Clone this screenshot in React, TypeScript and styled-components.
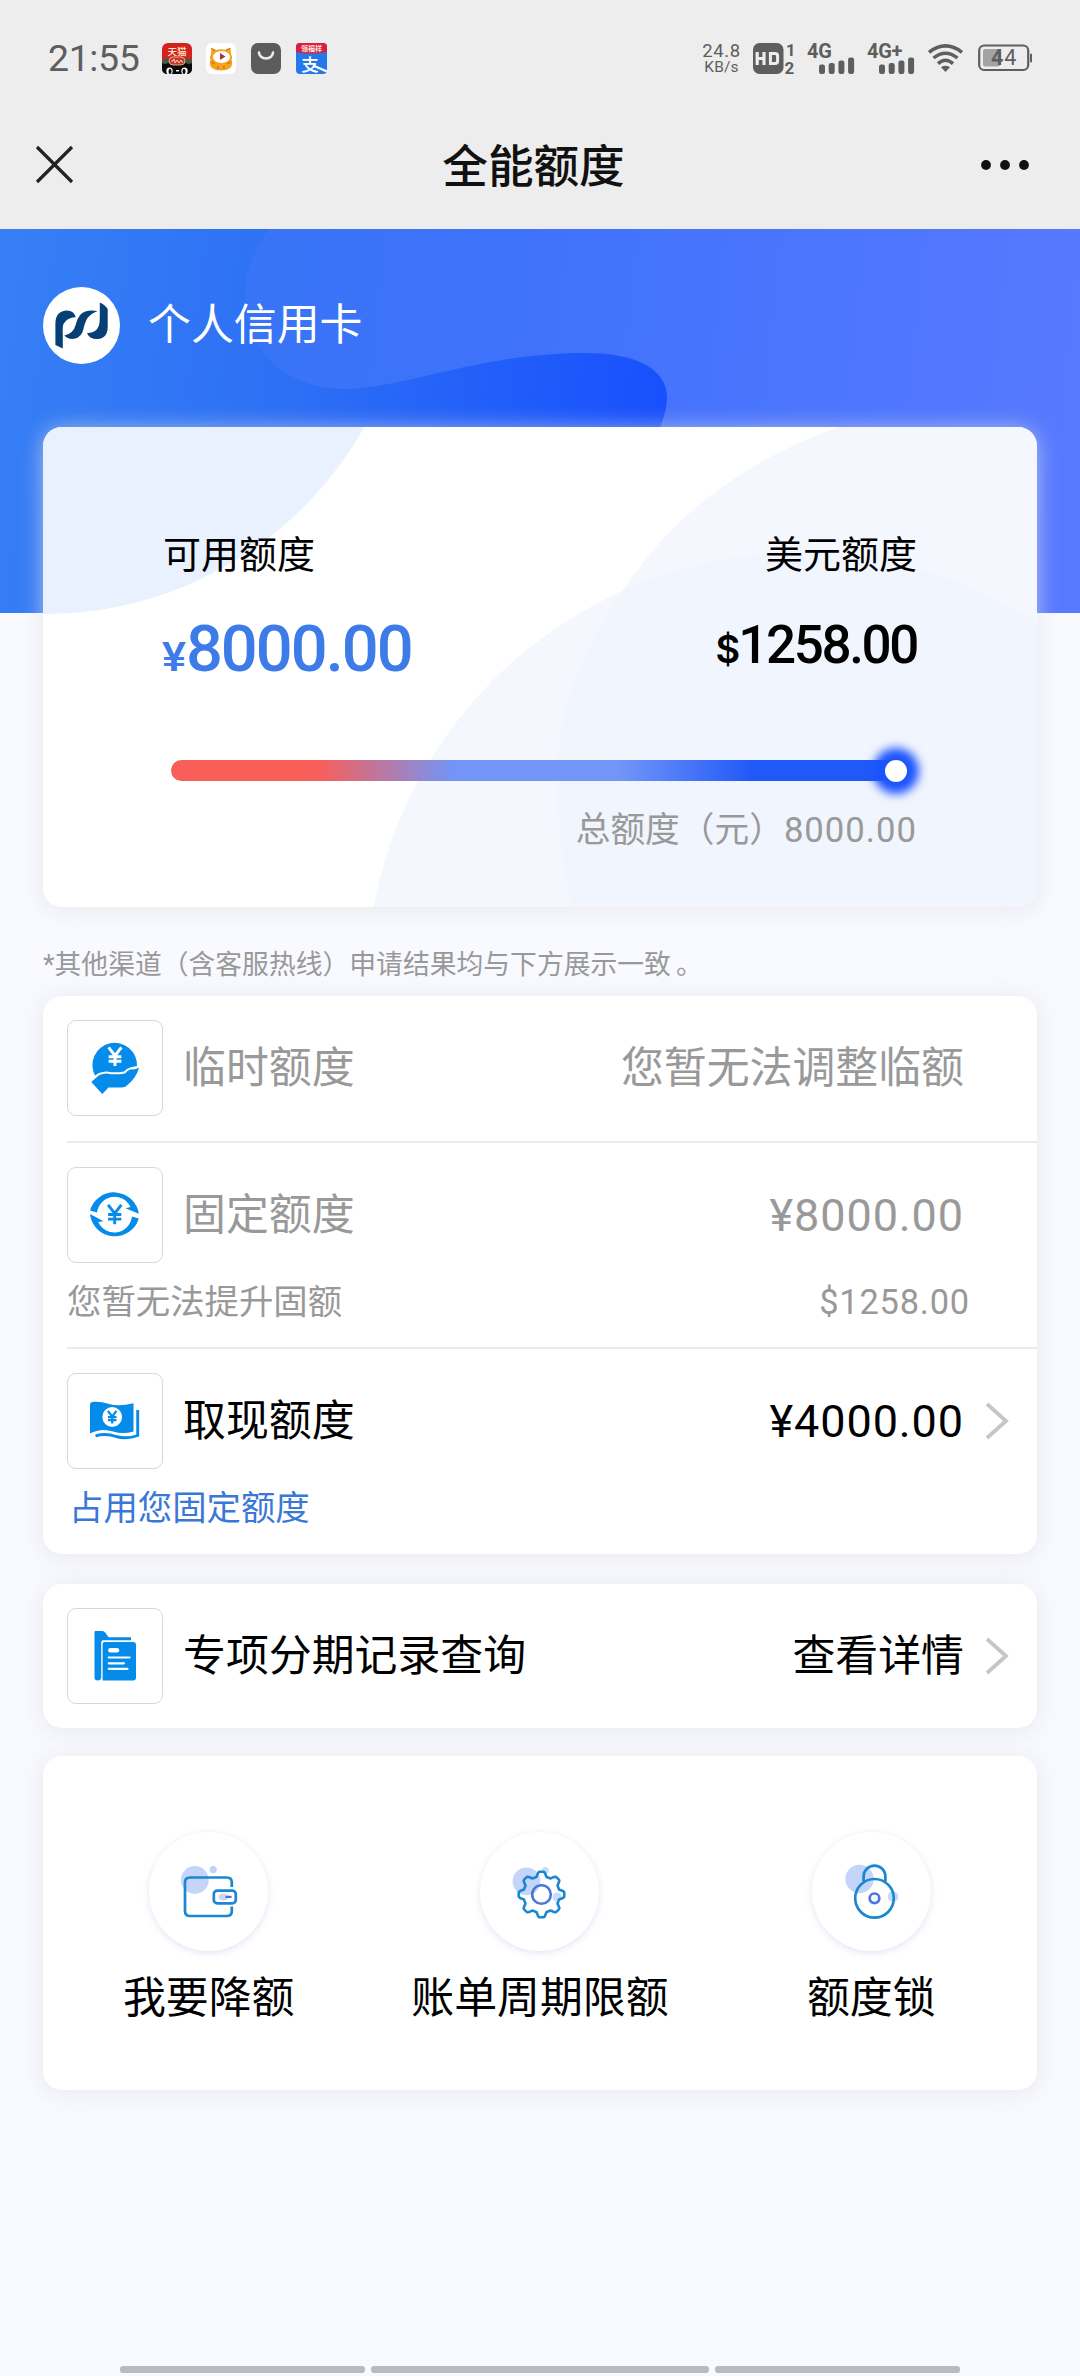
import React from 'react';
import styled, { createGlobalStyle } from 'styled-components';

const GlobalStyle = createGlobalStyle`
  *, *::before, *::after { box-sizing: border-box; }
  body {
    margin: 0;
    background: #f9faff;
    font-family: Roboto, 'Noto Sans CJK SC', sans-serif;
    color: #000;
  }
  svg { display: block; overflow: visible; }
`;

const Page = styled.div`
  width: 1080px;
  height: 2376px;
  display: flex;
  flex-direction: column;
  overflow: hidden;
  background: #f9faff;
`;

/* ---------- system status bar ---------- */

const Header = styled.header`
  height: 229px;
  flex: none;
  background: #ededed;
`;

const StatusBar = styled.div`
  height: 116px;
  display: flex;
  align-items: center;
  justify-content: space-between;
  padding: 0 47px 0 48px;
  color: #5e5e5e;
`;

const StatusGroup = styled.div<{ $gap: number }>`
  display: flex;
  align-items: center;
  gap: ${(p) => p.$gap}px;
`;

const Clock = styled.span`
  font-size: 37.5px;
  line-height: 44px;
  width: 99px;
  letter-spacing: -0.4px;
`;

const NetSpeed = styled.div`
  display: flex;
  flex-direction: column;
  align-items: center;
  font-size: 18.5px;
  line-height: 18px;
  width: 39px;
  letter-spacing: 0.6px;
`;

const SpeedUnit = styled.span`
  font-size: 15.5px;
  line-height: 14px;
  letter-spacing: 0.2px;
`;

const WifiSlot = styled.span`
  margin: 0 3px 0 1px;
`;

const NavBar = styled.div`
  height: 97px;
  display: flex;
  align-items: center;
  justify-content: space-between;
  padding: 0 50px 0 35px;
`;

const NavSide = styled.div<{ $end?: boolean }>`
  width: 120px;
  display: flex;
  justify-content: ${(p) => (p.$end ? 'flex-end' : 'flex-start')};
`;

const NavTitle = styled.h1`
  margin: 6px 0 0 2px;
  font-size: 45.6px;
  line-height: 60px;
  font-weight: 500;
  color: #111;
`;

/* ---------- hero ---------- */

const Hero = styled.section`
  position: relative;
  height: 384px;
  flex: none;
  padding: 58px 43px 0;
`;

const HeroArt = styled.svg`
  position: absolute;
  inset: 0;
  overflow: hidden;
`;

const Brand = styled.div`
  position: relative;
  display: flex;
  align-items: center;
  gap: 28px;
  height: 77px;
  color: #fff;
  font-size: 42.9px;
`;

const BrandName = styled.span`
  line-height: 62px;
  padding-bottom: 2px;
`;

const BrandBadge = styled.div`
  width: 77px;
  height: 77px;
  border-radius: 50%;
  background: #fff;
`;

/* ---------- cards ---------- */

const Content = styled.main`
  position: relative;
  display: flex;
  flex-direction: column;
  margin-top: -186px;
  padding: 0 43px;
`;

const Card = styled.section`
  border-radius: 19px;
  background: #fff;
  box-shadow: 0 2px 22px rgba(224, 224, 228, 0.7);
`;

const SummaryCard = styled(Card)`
  position: relative;
  height: 480px;
  padding: 103px 120px 0;
`;

const SummaryArt = styled.svg`
  position: absolute;
  inset: 0;
  border-radius: 19px;
  overflow: hidden;
`;

const SummaryBody = styled.div`
  position: relative;
  display: flex;
  flex-direction: column;
`;

const Split = styled.div<{ $mt?: number }>`
  display: flex;
  justify-content: space-between;
  align-items: flex-start;
  margin-top: ${(p) => p.$mt ?? 0}px;
`;

const SummaryLabel = styled.span`
  font-size: 38px;
  line-height: 50px;
`;

const Amount = styled.div<{ $size: number; $line: number; $spacing: number; $color: string }>`
  display: flex;
  align-items: baseline;
  font-weight: 500;
  font-size: ${(p) => p.$size}px;
  line-height: ${(p) => p.$line}px;
  letter-spacing: ${(p) => p.$spacing}px;
  color: ${(p) => p.$color};
`;

const YenSign = styled.small`
  font-family: 'Liberation Sans', sans-serif;
  font-weight: 700;
  font-size: 43px;
  line-height: 1;
  letter-spacing: 0;
  margin-left: -1px;
`;

const DollarSign = styled.small`
  font-family: Inter, sans-serif;
  font-weight: 600;
  font-size: 38px;
  line-height: 1;
  letter-spacing: 0;
  margin-right: -2px;
`;

const Track = styled.div`
  display: flex;
  align-items: center;
  justify-content: flex-end;
  width: 736px;
  height: 21px;
  margin: 72px 0 0 8px;
  border-radius: 11px;
  background: linear-gradient(90deg, #f85f59 0%, #f85f59 20%, #7295f7 38.5%, #7295f7 61%, #2159f8 79%, #2159f8 100%);
`;

const Thumb = styled.span`
  width: 22px;
  height: 22px;
  border-radius: 50%;
  background: #fff;
  box-shadow: 0 0 10px 12px #1b54fc;
`;

const TotalLine = styled.div`
  margin-top: 24px;
  text-align: right;
  font-size: 34.7px;
  line-height: 50px;
  color: #999;
`;

const Digits = styled.span<{ $spacing?: number }>`
  letter-spacing: ${(p) => p.$spacing ?? 1}px;
`;

const Notice = styled.p`
  margin: 0;
  height: 89px;
  padding-top: 38px;
  font-size: 26.8px;
  line-height: 40px;
  color: #999;
`;

const FullStop = styled.span`
  margin-left: 5px;
`;

const ListCard = styled(Card)`
  padding-left: 24px;
  margin-bottom: 30px;
`;

const Item = styled.div<{ $h: number; $last?: boolean }>`
  height: ${(p) => p.$h}px;
  padding-top: 24px;
  border-bottom: 2px solid ${(p) => (p.$last ? 'transparent' : '#ebebeb')};
`;

const ItemRow = styled.div<{ $muted?: boolean }>`
  display: flex;
  align-items: center;
  height: 96px;
  font-size: 42.9px;
  color: ${(p) => (p.$muted ? '#999' : '#000')};
`;

const IconBox = styled.div`
  width: 96px;
  height: 96px;
  flex: none;
  border: 1px solid #d8d8d8;
  border-radius: 9px;
  margin-right: 20px;
`;

const ItemLabel = styled.span`
  flex: 1;
  line-height: 62px;
`;

const ItemText = styled.span`
  line-height: 62px;
`;

const Trailing = styled.div`
  width: 73px;
  padding-left: 21px;
  flex: none;
`;

const Money = styled.span`
  font-size: 45px;
  letter-spacing: 0.9px;
`;

const SubRow = styled.div<{ $indent?: number; $color: string }>`
  display: flex;
  justify-content: space-between;
  padding: 14px 67px 0 ${(p) => p.$indent ?? 0}px;
  font-size: 34.4px;
  line-height: 50px;
  color: ${(p) => p.$color};
`;

const LinkCard = styled(Card)`
  height: 144px;
  padding: 24px 0 0 24px;
  margin-bottom: 28px;
`;

const ActionCard = styled(Card)`
  height: 334px;
  display: grid;
  grid-template-columns: repeat(3, 1fr);
  padding-top: 76px;
`;

const Action = styled.div`
  display: flex;
  flex-direction: column;
  align-items: center;
  font-size: 42.9px;
  line-height: 60px;
  gap: 17px;
`;

const ActionDisc = styled.div`
  width: 119px;
  height: 119px;
  border-radius: 50%;
  background: #fff;
  box-shadow: 0 2px 7px rgba(120, 120, 210, 0.2);
`;

const HomeHint = styled.div`
  margin-top: auto;
  display: grid;
  grid-template-columns: 245px 338px 245px;
  gap: 6px;
  padding: 0 0 3px 120px;
`;

const HintBar = styled.span`
  height: 7px;
  border-radius: 3px;
  background: #babbc0;
`;

/* ---------- icons ---------- */

const BLUE = '#058bea';
const LINE = '#1b86d2';

const TmallApp = () => (
  <svg width="30" height="31" viewBox="0 0 30 31">
    <rect width="30" height="31" rx="6" fill="#d3231f" />
    <path d="M0 17 L6 15 H24 L30 17 V25 Q30 31 24 31 H6 Q0 31 0 25Z" fill="#3f5b44" />
    <path d="M0 20 Q3 22 6 20 H24 Q27 22 30 20 V25 Q30 31 24 31 H6 Q0 31 0 25Z" fill="#0a0a0a" />
    <rect x="7" y="14" width="16" height="8" rx="4" fill="#c8352c" stroke="#f0c8a8" strokeWidth=".8" />
    <path d="M9 18h2l1-2 1 4 2-3 2 3 2-3 1 2h1" stroke="#f5d0b0" strokeWidth="1" fill="none" />
    <ellipse cx="7.5" cy="28" rx="3.2" ry="3.6" fill="#fff" />
    <ellipse cx="22.5" cy="28" rx="3.2" ry="3.6" fill="#fff" />
    <ellipse cx="8" cy="28.4" rx="1.5" ry="2.6" fill="#0a0a0a" />
    <ellipse cx="22" cy="28.4" rx="1.5" ry="2.6" fill="#0a0a0a" />
    <rect x="14" y="27" width="3" height="1.4" fill="#fff" />
    <text x="15" y="11.5" fontSize="9.6" textAnchor="middle" fill="#ffe6c8" fontWeight="500">天猫</text>
  </svg>
);

const CatVideoApp = () => (
  <svg width="30" height="31" viewBox="0 0 30 31">
    <rect width="30" height="31" rx="6" fill="#fff" />
    <path d="M5 11 L5.5 5 L10 7 Q15 5.5 20 7 L24.5 4.5 L25 11 Q27 14 25.6 17 Q28.5 27 15 27.5 Q1.5 27 4.4 17 Q3 14 5 11Z" fill="#f5a31f" />
    <path d="M5 5.5 L9 7.5 M20 7 L24 5.5 M5 19 l4 2 M25 19 l-4 2 M12 26 v-3 M18 26 v-3" stroke="#c9741a" strokeWidth="1.3" />
    <ellipse cx="15.5" cy="14" rx="8.6" ry="6" fill="#fff" />
    <path d="M14 10 L19.5 13.5 L14 17Z" fill="#a8382f" />
  </svg>
);

const BagApp = () => (
  <svg width="30" height="31" viewBox="0 0 30 31">
    <rect width="30" height="31" rx="7" fill="#5c5c5c" />
    <path d="M8 9.5 a7 6 0 0 0 14 0" fill="none" stroke="#ececec" strokeWidth="2.6" strokeLinecap="round" />
  </svg>
);

const AlipayApp = () => (
  <svg width="31" height="31" viewBox="0 0 31 31">
    <rect width="31" height="31" rx="4" fill="#2478ea" />
    <path d="M0 4 Q0 0 4 0 H27 Q31 0 31 4 V9 Q15.5 12.5 0 9Z" fill="#d81f46" />
    <text x="15.5" y="8.4" fontSize="7" textAnchor="middle" fill="#ffe9d8" fontWeight="700">领福祥</text>
    <text x="14" y="27.5" fontSize="17.5" textAnchor="middle" fill="#fff" fontWeight="500">支</text>
    <path d="M17 22.5 L31 28.5" stroke="#fff" strokeWidth="2.4" />
  </svg>
);

const HdBadge = () => (
  <svg width="42" height="39" viewBox="0 -4 42 39">
    <rect width="30.5" height="31" rx="6.5" fill="#5e5e5e" />
    <path d="M4.2 9V22M11 9V22M4.2 15.5H11" stroke="#ededed" strokeWidth="3.2" fill="none" />
    <path d="M17.4 10.5H22Q24.6 10.5 24.6 13V18Q24.6 20.5 22 20.5H17.4Z" stroke="#ededed" strokeWidth="3" fill="none" />
    <text x="33" y="12.5" fontSize="16.5" fontWeight="700" fill="#5e5e5e">1</text>
    <text x="31.5" y="31" fontSize="17" fontWeight="700" fill="#5e5e5e">2</text>
  </svg>
);

const Signal = ({ label }: { label: string }) => (
  <svg width="48" height="35" viewBox="0 -2 48 35">
    <text x="0" y="14.5" fontSize="20" fontWeight="700" fill="#5e5e5e" letterSpacing="-0.3">{label}</text>
    {[9.5, 11, 13.5, 16.5].map((h, i) => (
      <rect key={h} x={12 + i * 9.7} y={31 - h} width="6" height={h} rx="2.2" fill="#5e5e5e" />
    ))}
  </svg>
);

const Wifi = () => (
  <svg width="35" height="28" viewBox="0 0 35 28">
    <g fill="none" stroke="#5e5e5e" strokeWidth="3.5">
      <path d="M1 8.3 Q17.5 -4.5 34 8.3" />
      <path d="M5.5 14 Q17.5 4.5 29.5 14" />
      <path d="M10 19.6 Q17.5 13 25 19.6" />
    </g>
    <path d="M13 23.2 Q17.5 20.5 22 23.2 L17.5 28Z" fill="#5e5e5e" />
  </svg>
);

const Battery = () => (
  <svg width="55" height="28" viewBox="0 0 55 28">
    <rect x="1.2" y="1.5" width="49" height="24.5" rx="5" fill="none" stroke="#5e5e5e" strokeWidth="2.2" />
    <rect x="5" y="5" width="17" height="17.5" rx="2" fill="#a3a3a3" />
    <rect x="52" y="9.5" width="2" height="9" rx="1" fill="#5e5e5e" />
    <text x="26" y="21" fontSize="21.5" textAnchor="middle" fill="#5e5e5e" letterSpacing="0.8">
      <tspan fontWeight="700">4</tspan>4
    </text>
  </svg>
);

const CloseIcon = () => (
  <svg width="39" height="39" viewBox="0 0 39 39">
    <path d="M2 2L37 37M37 2L2 37" stroke="#222" strokeWidth="3.2" />
  </svg>
);

const MoreIcon = () => (
  <svg width="50" height="12" viewBox="0 0 50 12">
    <circle cx="6" cy="6" r="4.9" fill="#111" />
    <circle cx="25" cy="6" r="4.9" fill="#111" />
    <circle cx="44" cy="6" r="4.9" fill="#111" />
  </svg>
);

const BankLogo = () => (
  <svg width="77" height="77" viewBox="0 0 77 77" fill="#063f73">
    <path d="M12.4 58 V36 Q12.8 24 24 23.6 Q30.5 23.6 32.8 30 Q24 30.5 20.5 37 Q19.3 40 19.8 47 V61.5 Z" />
    <path d="M54.5 24 Q43 22 37.5 27.5 Q34 31.5 32.8 37.5 Q30.5 46.5 21.3 48.5 Q25.5 53 32.5 51.5 Q38.5 49.5 40.3 42.5 Q42 35 44.5 31 Q48 26.5 54.5 24Z" />
    <path d="M56.8 15.5 Q62 17.5 64.7 22 V40 Q64.5 51.5 54.5 52 Q46.5 52.3 44 46 Q53 46.5 56 38.5 Q57 34.5 56.8 28Z" />
  </svg>
);

const Yen = ({ x, y, s, color, w }: { x: number; y: number; s: number; color: string; w: number }) => (
  <path
    transform={`translate(${x} ${y}) scale(${s})`}
    d="M-6.5 -9.5 L0 -1 L6.5 -9.5 M0 -1 V9.5 M-6.5 0 H6.5 M-6.5 4.6 H6.5"
    fill="none"
    stroke={color}
    strokeWidth={w}
  />
);

const HandCoinIcon = () => (
  <svg width="94" height="94" viewBox="1 1 94 94">
    <path
      d="M28 55.500 A22.300 22.300 0 1 1 70 46 L64 47.200 Q60 48 57 51.400 Q50 52.600 44 52.200 Q38 50.500 31.500 53.300 Z"
      fill={BLUE}
    />
    <path
      d="M24.3 62 L32 55.3 Q38 52.5 44 54.2 Q52 54.700 58 53.400 Q60.5 50 64 49.3 Q68 50 72.2 47.5 Q69 58 61 64.5 Q58.5 67.5 54.5 67.5 H41.5 L35.3 74 Z"
      fill={BLUE}
    />
    <Yen x={48} y={36.7} s={0.98} color="#fff" w={3} />
  </svg>
);

const CycleIcon = () => (
  <svg width="94" height="94" viewBox="1 1 94 94">
    <path
      d="M23 43.5 A25 25 0 0 1 71.8 46.8 L58.5 41.3 L63.5 40 A17.8 18.5 0 0 0 30 45.5 Z"
      fill={BLUE}
    />
    <path
      d="M71.8 51.5 A25 25 0 0 1 23 47 L36.5 54.3 L31.3 55 A17.8 18.5 0 0 0 65 49.5 Z"
      fill={BLUE}
    />
    <Yen x={47.7} y={47.5} s={1.02} color={BLUE} w={2.8} />
  </svg>
);

const BanknoteIcon = () => (
  <svg width="94" height="94" viewBox="1 1 94 94">
    <path
      d="M23 31.5 Q23 29 27 28.7 Q34 28.3 42 31 Q52 34 66.5 30.3 V58.5 Q56 61.5 46 58.5 Q34 54.5 23 60.5 Z"
      fill={BLUE}
    />
    <circle cx="45.2" cy="44" r="9.9" fill="#fff" />
    <Yen x={45.2} y={44.2} s={0.66} color={BLUE} w={3.4} />
    <path d="M70.7 37 V62.5 Q60 66.5 49 63.5 Q39 59.8 28.5 62.8" fill="none" stroke={BLUE} strokeWidth="2.9" />
  </svg>
);

const FolderIcon = () => (
  <svg width="94" height="94" viewBox="1 1 94 94">
    <path d="M27.5 24 Q27.5 23 28.5 23 H35 Q38 23 39.5 26.5 Q41 29.3 43 29.3 H64 V32.3 H36 Q34.2 32.3 34.2 34.5 V70 Q33.5 72.5 30.8 72.5 Q27.5 72.5 27.5 69.5 Z" fill={BLUE} />
    <path d="M35.6 36 Q35.6 34 38 34 H66 Q69 34 69 37 V69.5 Q69 72.5 66 72.5 H35.6 Z" fill={BLUE} />
    <path d="M43.3 42.2 H50" stroke="#fff" strokeWidth="4.4" strokeLinecap="round" />
    <path d="M41.8 49.5 H62.5 M41.8 55.3 H57 M41.8 60.8 H60.5" stroke="#fff" strokeWidth="2.2" strokeLinecap="round" />
  </svg>
);

const WalletIcon = () => (
  <svg width="119" height="119" viewBox="0 0 119 119" fill="none">
    <circle cx="45.8" cy="48" r="13.9" fill="#c5d4f9" />
    <circle cx="64.2" cy="37.6" r="3.6" fill="#c5d0f6" />
    <path d="M82.8 55 V50.5 Q82.8 45.5 77.8 45.5 H41 Q36 45.5 36 50.5 V79 Q36 84 41 84 H77.8 Q82.8 84 82.8 79 V74.5" stroke={LINE} strokeWidth="2.7" />
    <rect x="64.8" y="58.6" width="22" height="12.8" rx="3.5" stroke={LINE} strokeWidth="2.7" />
    <ellipse cx="74.5" cy="65" rx="5" ry="3.6" fill="#cdd4f6" />
    <path d="M77.5 64.9 H81.5" stroke="#4f6fd8" strokeWidth="2.4" strokeLinecap="round" />
  </svg>
);

const gearPath = (() => {
  const teeth = 8;
  const steps = teeth * 24;
  const pts: string[] = [];
  for (let i = 0; i <= steps; i += 1) {
    const a = (i / steps) * Math.PI * 2;
    const wave = Math.max(-1, Math.min(1, Math.cos(a * teeth) * 1.7));
    const r = 20.5 + wave * 2.3;
    pts.push(`${i ? 'L' : 'M'}${(61.5 + r * Math.cos(a)).toFixed(2)} ${(62.5 + r * Math.sin(a)).toFixed(2)}`);
  }
  return `${pts.join('')}Z`;
})();

const GearIcon = () => (
  <svg width="119" height="119" viewBox="0 0 119 119" fill="none">
    <circle cx="46.5" cy="49.3" r="13.9" fill="#c5d4f9" />
    <circle cx="65.3" cy="38.5" r="3.5" fill="#c5dcfa" />
    <circle cx="77" cy="65" r="4.5" fill="#c9dcfb" />
    <path d={gearPath} stroke={LINE} strokeWidth="2.6" strokeLinejoin="round" />
    <circle cx="61.5" cy="62.5" r="9.3" stroke="#4a78d8" strokeWidth="2.6" />
  </svg>
);

const LockIcon = () => (
  <svg width="119" height="119" viewBox="0 0 119 119" fill="none">
    <circle cx="47.5" cy="47" r="14.2" fill="#c5d4f9" />
    <circle cx="81" cy="64.5" r="5.3" fill="#c5d9fb" />
    <path d="M51.6 49.5 V44.5 A10.9 10.9 0 0 1 73.4 44.5 V49.5" stroke={LINE} strokeWidth="2.7" />
    <circle cx="62.5" cy="66.3" r="19.3" stroke={LINE} strokeWidth="2.7" />
    <circle cx="62.5" cy="66.3" r="4.8" stroke="#4a78d8" strokeWidth="2.7" />
  </svg>
);

const Chevron = () => (
  <svg width="24" height="38" viewBox="0 0 24 38">
    <path d="M2 2L21 19L2 36" fill="none" stroke="#c6c6c6" strokeWidth="3.8" />
  </svg>
);

/* ---------- page ---------- */

const UPPER_BUBBLE =
  'M840 427 C770 450 700 495 655 548 C600 615 557 690 557 775 C557 825 563 870 573 907 H1037 V427 Z';

const actions = [
  { label: '我要降额', icon: <WalletIcon /> },
  { label: '账单周期限额', icon: <GearIcon /> },
  { label: '额度锁', icon: <LockIcon /> },
];

export default function App() {
  return (
    <Page>
      <GlobalStyle />
      <Header>
        <StatusBar>
          <StatusGroup $gap={14.7}>
            <Clock>21:55</Clock>
            <TmallApp />
            <CatVideoApp />
            <BagApp />
            <AlipayApp />
          </StatusGroup>
          <StatusGroup $gap={12}>
            <NetSpeed>
              24.8
              <SpeedUnit>KB/s</SpeedUnit>
            </NetSpeed>
            <HdBadge />
            <Signal label="4G" />
            <Signal label="4G+" />
            <WifiSlot><Wifi /></WifiSlot>
            <Battery />
          </StatusGroup>
        </StatusBar>
        <NavBar>
          <NavSide><CloseIcon /></NavSide>
          <NavTitle>全能额度</NavTitle>
          <NavSide $end><MoreIcon /></NavSide>
        </NavBar>
      </Header>

      <Hero>
        <HeroArt width="1080" height="384" viewBox="0 0 1080 384">
          <defs>
            <linearGradient id="base" gradientUnits="userSpaceOnUse" x1="0" y1="100" x2="660" y2="190">
              <stop offset="0" stopColor="#367ff5" />
              <stop offset="0.45" stopColor="#2d6ff5" />
              <stop offset="1" stopColor="#1850fd" />
            </linearGradient>
            <linearGradient id="wave" gradientUnits="userSpaceOnUse" x1="240" y1="100" x2="1080" y2="190">
              <stop offset="0" stopColor="#3874f6" />
              <stop offset="0.35" stopColor="#4072fc" />
              <stop offset="1" stopColor="#5779ff" />
            </linearGradient>
          </defs>
          <rect width="1080" height="384" fill="url(#base)" />
          <path
            d="M269 0 C248 30 240 60 247 88 C255 126 290 162 350 160 C395 157 440 142 480 135 C520 127 555 124 585 124 C640 124 668 142 667 170 C666 185 662 192 658 205 L640 384 H1080 V0 Z"
            fill="url(#wave)"
          />
        </HeroArt>
        <Brand>
          <BrandBadge><BankLogo /></BrandBadge>
          <BrandName>个人信用卡</BrandName>
        </Brand>
      </Hero>

      <Content>
        <SummaryCard>
          <SummaryArt width="994" height="480" viewBox="43 427 994 480">
            <clipPath id="upper"><path d={UPPER_BUBBLE} /></clipPath>
            <circle cx="45" cy="248" r="366" fill="#e9f0fe" />
            <path d={UPPER_BUBBLE} fill="#f4f7fd" />
            <circle cx="800" cy="987" r="434" fill="#f4f7fe" />
            <circle cx="800" cy="987" r="434" fill="#f1f5fd" clipPath="url(#upper)" />
          </SummaryArt>
          <SummaryBody>
            <Split>
              <SummaryLabel>可用额度</SummaryLabel>
              <SummaryLabel>美元额度</SummaryLabel>
            </Split>
            <Split $mt={30}>
              <Amount $size={65} $line={78} $spacing={-2} $color="#3c7be8"><YenSign>¥</YenSign>8000.00</Amount>
              <Amount $size={53} $line={70} $spacing={-2.4} $color="#000"><DollarSign>$</DollarSign>1258.00</Amount>
            </Split>
            <Track><Thumb /></Track>
            <TotalLine>总额度（元）<Digits>8000.00</Digits></TotalLine>
          </SummaryBody>
        </SummaryCard>

        <Notice>*其他渠道（含客服热线）申请结果均与下方展示一致<FullStop>。</FullStop></Notice>

        <ListCard>
          <Item $h={147}>
            <ItemRow $muted>
              <IconBox><HandCoinIcon /></IconBox>
              <ItemLabel>临时额度</ItemLabel>
              <ItemText>您暂无法调整临额</ItemText>
              <Trailing />
            </ItemRow>
          </Item>
          <Item $h={206}>
            <ItemRow $muted>
              <IconBox><CycleIcon /></IconBox>
              <ItemLabel>固定额度</ItemLabel>
              <Money>¥8000.00</Money>
              <Trailing />
            </ItemRow>
            <SubRow $color="#999">
              <span>您暂无法提升固额</span>
              <Digits $spacing={0.8}>$1258.00</Digits>
            </SubRow>
          </Item>
          <Item $h={205} $last>
            <ItemRow>
              <IconBox><BanknoteIcon /></IconBox>
              <ItemLabel>取现额度</ItemLabel>
              <Money>¥4000.00</Money>
              <Trailing><Chevron /></Trailing>
            </ItemRow>
            <SubRow $indent={2} $color="#3a78d8">
              <span>占用您固定额度</span>
            </SubRow>
          </Item>
        </ListCard>

        <LinkCard>
          <ItemRow>
            <IconBox><FolderIcon /></IconBox>
            <ItemLabel>专项分期记录查询</ItemLabel>
            <ItemText>查看详情</ItemText>
            <Trailing><Chevron /></Trailing>
          </ItemRow>
        </LinkCard>

        <ActionCard>
          {actions.map((a) => (
            <Action key={a.label}>
              <ActionDisc>{a.icon}</ActionDisc>
              <span>{a.label}</span>
            </Action>
          ))}
        </ActionCard>
      </Content>

      <HomeHint>
        <HintBar />
        <HintBar />
        <HintBar />
      </HomeHint>
    </Page>
  );
}
